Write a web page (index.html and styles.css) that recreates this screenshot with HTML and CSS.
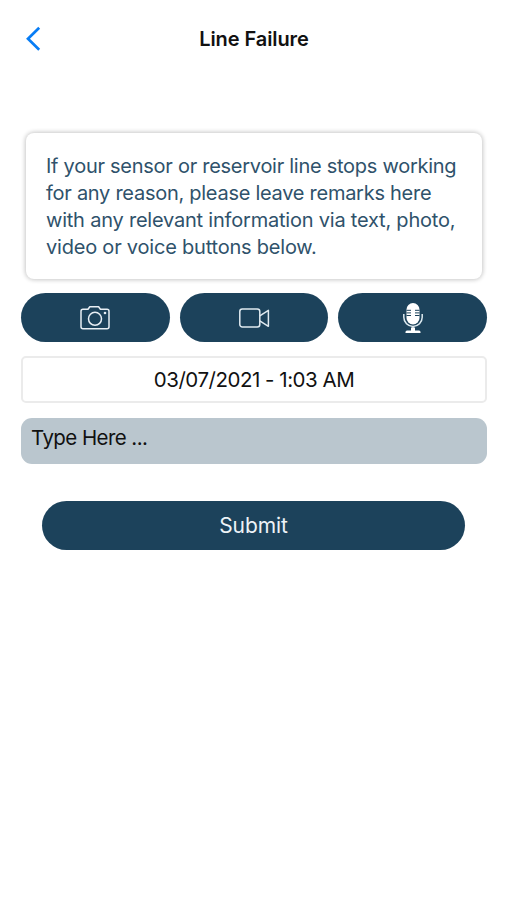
FILE: index.html
```html
<!DOCTYPE html>
<html lang="en">
<head>
<meta charset="utf-8">
<meta name="viewport" content="width=device-width, initial-scale=1">
<title>Line Failure</title>
<link rel="stylesheet" href="styles.css">
</head>
<body>
<header class="nav">
  <button class="back" type="button" aria-label="Back">
    <svg width="16" height="26" viewBox="0 0 16 26" fill="none" stroke="#087df5" stroke-width="2.7"><path d="M14.2 1.700 3 12.700 14.2 23.700"/></svg>
  </button>
  <h1 class="title">Line Failure</h1>
</header>
<main class="content">
  <p class="notice">If your sensor or reservoir line stops working<br>for any reason, please leave remarks here<br><span class="wide">with any relevant information via text, photo,</span><br><span class="wide">video or voice buttons below.</span></p>
  <div class="actions">
    <button class="pill" type="button" aria-label="Photo">
      <svg width="32" height="28" viewBox="0 0 32 28" fill="none" stroke="#e8eff5" stroke-width="1.5" stroke-linejoin="round"><path d="M4 5.300h5l1.800-2.500h8.800l1.800 2.500H28q2 0 2 2v15.400q0 2-2 2H4q-2 0-2-2V7.300q0-2 2-2Z"/><circle cx="16" cy="14.800" r="6.500"/><circle cx="26" cy="9" r="1.300" fill="#e8eff5" stroke="none"/></svg>
    </button>
    <button class="pill" type="button" aria-label="Video">
      <svg width="32" height="28" viewBox="0 0 32 28" fill="none" stroke="#e0eaf0" stroke-width="1.500" stroke-linejoin="round"><rect x="1.800" y="5" width="20" height="18" rx="2.500"/><path d="M21.800 11.800 30.400 6.300v16L21.800 16.800"/></svg>
    </button>
    <button class="pill" type="button" aria-label="Voice">
      <svg width="24" height="32" viewBox="0 0 24 32"><path fill="#fff" d="M5.500 7.500a6.500 6.500 0 0 1 13 0v8.500a6.500 6.500 0 0 1-13 0Z"/><path d="M5.500 8.300H10m-4.500 2.600H10m-4.500 2.600H10m4-5.200h4.500M14 10.900h4.500M14 13.500h4.500" stroke="#1c425b" stroke-width="1"/><path d="M2.800 12V15.200a9.200 9.200 0 0 0 18.400 0V12M12 24.400V28" fill="none" stroke="#dce9ef" stroke-width="1.500"/><path d="M4.500 31v-1q0-1.500 1.500-1.500h4v-3h4v3h4q1.500 0 1.500 1.500v1Z" fill="#fff"/></svg>
    </button>
  </div>
  <div class="date">03/07/2021 - 1:03 AM</div>
  <div class="remarks" role="textbox">Type Here ...</div>
  <button class="submit" type="button">Submit</button>
</main>
</body>
</html>
```
FILE: styles.css
```css
* { box-sizing: border-box; }
body {
  margin: 0;
  min-height: 100vh;
  background: #fff;
  color: #111;
  font-family: Inter, "Liberation Sans", sans-serif;
  font-size: 20px;
}
button { font: inherit; border: 0; padding: 0; }
.nav {
  display: grid;
  grid-template-columns: 48px 1fr 48px;
  align-items: center;
  height: 77px;
}
.back { display: flex; padding-left: 25px; background: none; }
.title {
  margin: 0;
  padding-left: 1px;
  text-align: center;
  font-size: 20px;
  font-weight: 600;
  letter-spacing: -0.08px;
}
.content {
  display: flex;
  flex-direction: column;
  padding: 56px 20px 0 21px;
}
.notice {
  margin: 0 5px 0 5px;
  height: 146px;
  padding: 20px 0 0 20px;
  border-radius: 8px;
  box-shadow: 0 0 4px 1px rgba(0, 0, 0, 0.22);
  color: #2f526b;
  line-height: 27px;
  letter-spacing: -0.27px;
  white-space: nowrap;
}
.wide { letter-spacing: -0.21px; }
.actions {
  display: grid;
  grid-template-columns: repeat(3, 1fr);
  gap: 10px;
  margin-top: 14px;
}
.pill {
  display: flex;
  align-items: center;
  justify-content: center;
  height: 49px;
  border-radius: 25px;
  background: #1c425b;
}
.date {
  height: 47px;
  margin-top: 14px;
  border: 2px solid #ebebeb;
  border-radius: 5px;
  font-size: 20.5px;
  line-height: 44px;
  text-align: center;
  letter-spacing: -0.48px;
}
.remarks {
  height: 46px;
  margin-top: 15px;
  padding-left: 10px;
  border-radius: 11px;
  background: #bac6ce;
  font-size: 20.5px;
  line-height: 40px;
  letter-spacing: -0.57px;
}
.submit {
  height: 49px;
  margin: 37px 22px 0 21px;
  border-radius: 25px;
  background: #1c425b;
  color: #edf3f7;
  font-size: 21px;
  letter-spacing: -0.1px;
}
```
